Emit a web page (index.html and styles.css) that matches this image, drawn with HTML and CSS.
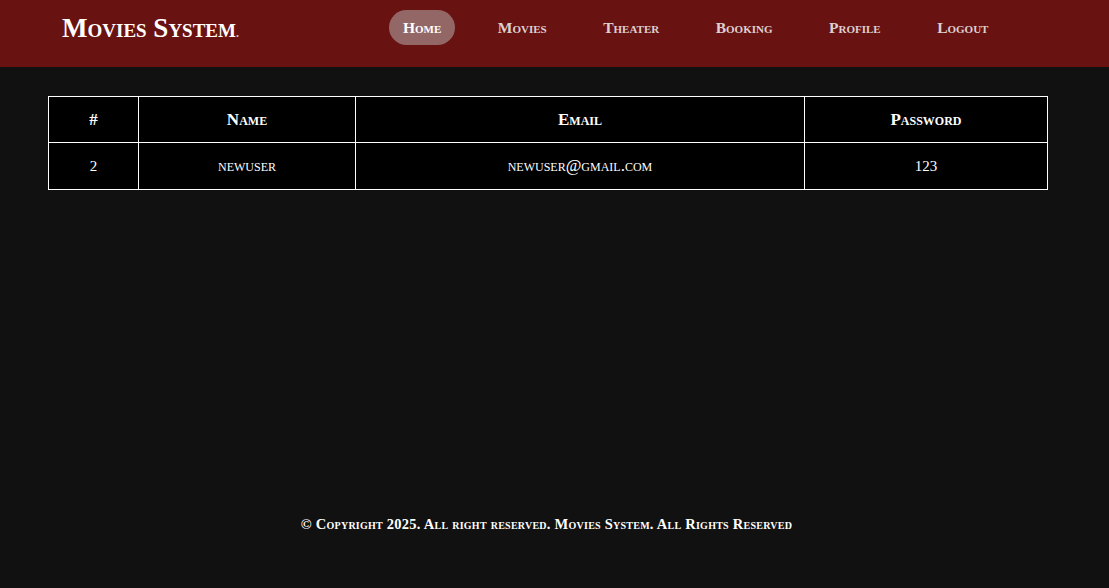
FILE: index.html
```html
<!DOCTYPE html>
<html lang="en">
<head>
<meta charset="utf-8">
<title>Movies System</title>
<link rel="stylesheet" href="styles.css">
</head>
<body>
<header class="topbar">
  <div class="brand">Movies System<span class="dot">.</span></div>
  <nav class="nav">
    <a class="nav-link active" href="#">Home</a>
    <a class="nav-link" href="#">Movies</a>
    <a class="nav-link" href="#">Theater</a>
    <a class="nav-link" href="#">Booking</a>
    <a class="nav-link" href="#">Profile</a>
    <a class="nav-link" href="#">Logout</a>
  </nav>
</header>
<main class="content">
  <table class="users">
    <colgroup>
      <col class="c-id"><col class="c-name"><col class="c-email"><col class="c-pass">
    </colgroup>
    <thead>
      <tr><th>#</th><th>Name</th><th>Email</th><th>Password</th></tr>
    </thead>
    <tbody>
      <tr><td>2</td><td class="lc">newuser</td><td class="lc">newuser@gmail.com</td><td>123</td></tr>
    </tbody>
  </table>
</main>
<footer class="footer">© Copyright 2025. All right reserved. Movies System. All Rights Reserved</footer>
</body>
</html>
```
FILE: styles.css
```css
* { box-sizing: border-box; }
html, body { margin: 0; padding: 0; }
body {
  background: #111111;
  color: #ffffff;
  font-family: "Liberation Serif", "DejaVu Serif", serif;
  font-variant: small-caps;
  min-height: 100vh;
  display: flex;
  flex-direction: column;
}
.topbar {
  height: 67px;
  background: #691212;
  display: flex;
  align-items: center;
  padding-left: 62px;
}
.brand {
  font-size: 27px;
  font-weight: bold;
  color: #ffffff;
  width: 327px;
  margin-top: -11px;
}
.brand .dot { font-size: 12px; color: #cfc2c2; }
.nav {
  display: flex;
  align-items: center;
  gap: 28.5px;
  margin-top: -12px;
}
.nav-link {
  font-size: 15.5px;
  font-weight: bold;
  color: #ddd0d0;
  text-decoration: none;
  height: 35px;
  line-height: 35px;
  padding: 0 14px;
  border-radius: 18px;
}
.nav-link.active {
  background: #946767;
  color: #ffffff;
}
.content {
  padding: 29px 0 0 48px;
}
.users {
  border-collapse: collapse;
  width: 999px;
  background: #000000;
  table-layout: fixed;
}
.c-id { width: 90px; }
.c-name { width: 217px; }
.c-email { width: 449px; }
.c-pass { width: 243px; }
.users th, .users td {
  border: 1px solid #ffffff;
  text-align: center;
  color: #ffffff;
}
.users th {
  height: 46px;
  font-size: 17px;
  font-weight: bold;
}
.users td {
  height: 47px;
  font-size: 15px;
}
.users td.lc { font-size: 17px; }
.footer {
  margin-top: auto;
  text-align: center;
  font-size: 14.5px;
  letter-spacing: 0.25px;
  font-weight: bold;
  padding: 0 16px 54px 0;
  line-height: 20px;
}
```
